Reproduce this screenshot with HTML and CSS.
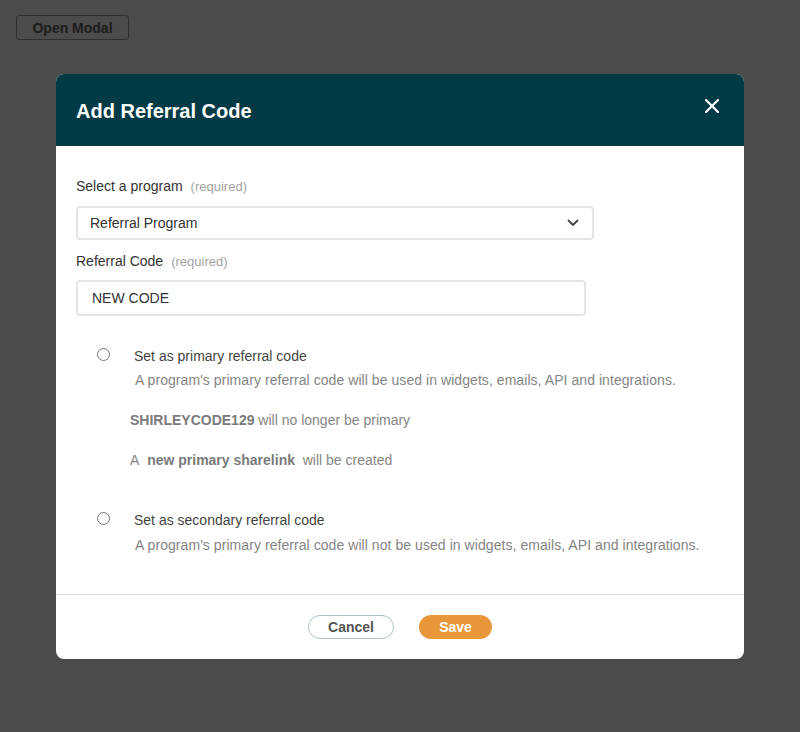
FILE: index.html
```html
<!DOCTYPE html>
<html lang="en">
<head>
<meta charset="utf-8">
<title>Add Referral Code</title>
<link rel="stylesheet" href="styles.css">
</head>
<body>
<button class="open-btn" type="button">Open Modal</button>
<div class="modal">
  <div class="modal-header">
    <h2 class="modal-title">Add Referral Code</h2>
    <button class="close-btn" type="button" aria-label="Close">
      <svg width="14" height="14" viewBox="0 0 14 14"><path d="M1 1 L13 13 M13 1 L1 13" stroke="#fff" stroke-width="2.2" stroke-linecap="round"/></svg>
    </button>
  </div>
  <div class="modal-body">
    <div class="label">Select a program<span class="req">(required)</span></div>
    <div class="select">
      <span>Referral Program</span>
      <svg width="12" height="8" viewBox="0 0 12 8"><path d="M1.5 1.5 L6 6 L10.5 1.5" fill="none" stroke="#444" stroke-width="1.8" stroke-linecap="round" stroke-linejoin="round"/></svg>
    </div>
    <div class="label label-2">Referral Code<span class="req">(required)</span></div>
    <div class="input">NEW CODE</div>

    <div class="option option-1">
      <span class="radio"></span>
      <div class="option-text">
        <div class="option-label">Set as primary referral code</div>
        <div class="option-desc">A program's primary referral code will be used in widgets, emails, API and integrations.</div>
      </div>
    </div>
    <div class="info">
      <p class="info-line"><b>SHIRLEYCODE129</b> will no longer be primary</p>
      <p class="info-line">A&nbsp; <b>new primary sharelink</b>&nbsp; will be created</p>
    </div>
    <div class="option option-2">
      <span class="radio"></span>
      <div class="option-text">
        <div class="option-label">Set as secondary referral code</div>
        <div class="option-desc">A program's primary referral code will not be used in widgets, emails, API and integrations.</div>
      </div>
    </div>
  </div>
  <div class="modal-footer">
    <button class="btn btn-cancel" type="button">Cancel</button>
    <button class="btn btn-save" type="button">Save</button>
  </div>
</div>
</body>
</html>
```

FILE: styles.css
```css
* { box-sizing: border-box; }

html, body {
  margin: 0;
  height: 100%;
}

body {
  background: #4b4b4b;
  font-family: "Liberation Sans", Arial, Helvetica, sans-serif;
  padding: 15px 16px;
}

.open-btn {
  display: block;
  width: 113px;
  height: 25px;
  padding: 0;
  background: #4b4b4b;
  border: 1px solid #2f2f2f;
  border-radius: 3px;
  font-family: inherit;
  font-size: 14px;
  font-weight: bold;
  color: #1c1c1c;
}

.modal {
  margin: 34px 0 0 40px;
  width: 688px;
  background: #fff;
  border-radius: 8px;
  overflow: hidden;
}

.modal-header {
  height: 72px;
  background: #023b46;
  display: flex;
  align-items: center;
  justify-content: space-between;
  padding: 0 24px 0 20px;
}

.modal-title {
  margin: 0;
  font-size: 20px;
  font-weight: bold;
  color: #fff;
  padding-top: 2px;
}

.close-btn {
  background: none;
  border: 0;
  padding: 0;
  width: 16px;
  height: 16px;
  display: flex;
  align-items: center;
  justify-content: center;
  margin-top: -8px;
}

.modal-body {
  padding: 30px 20px 39px;
}

.label {
  font-size: 14px;
  line-height: 20px;
  height: 20px;
  color: #333;
}

.label-2 { margin-top: 11px; }

.req {
  margin-left: 8px;
  font-size: 13px;
  line-height: 1;
  color: #a3a3a3;
}

.select {
  margin-top: 10px;
  width: 518px;
  height: 34px;
  border: 2px solid #e4e4e4;
  border-radius: 4px;
  display: flex;
  align-items: center;
  justify-content: space-between;
  padding: 0 13px 0 12px;
  font-size: 14px;
  color: #333;
}

.input {
  margin-top: 9px;
  width: 510px;
  height: 36px;
  border: 2px solid #e4e4e4;
  border-radius: 4px;
  display: flex;
  align-items: center;
  padding: 0 14px;
  font-size: 14px;
  color: #333;
}

.option {
  display: grid;
  grid-template-columns: 13px 1fr;
  column-gap: 24px;
  padding-left: 21px;
}

.option-1 { margin-top: 30px; }
.option-2 { margin-top: 40px; }

.radio {
  width: 13px;
  height: 13px;
  border: 1px solid #777;
  border-radius: 50%;
  margin-top: 2px;
  background: #fff;
}

.option-label {
  font-size: 14px;
  line-height: 20px;
  color: #444;
}

.option-desc {
  margin-top: 4px;
  padding-left: 1px;
  font-size: 14px;
  line-height: 20px;
  letter-spacing: 0.06px;
  color: #858585;
}

.option-2 .option-desc { margin-top: 5px; }

.info {
  padding-left: 54px;
}

.info-line {
  margin: 20px 0 0;
  font-size: 14px;
  line-height: 20px;
  color: #858585;
}

.info-line b { color: #7a7a7a; }

.modal-footer {
  border-top: 1px solid #e2e2e2;
  height: 65px;
  display: flex;
  align-items: center;
  justify-content: center;
  gap: 25px;
}

.btn {
  height: 24px;
  border-radius: 12px;
  font-family: inherit;
  font-size: 14px;
  font-weight: bold;
  padding: 0;
}

.btn-cancel {
  width: 86px;
  background: #fff;
  border: 1px solid #a9c1c8;
  color: #555;
}

.btn-save {
  width: 73px;
  background: #e8963a;
  border: 0;
  color: #fff;
}
```
